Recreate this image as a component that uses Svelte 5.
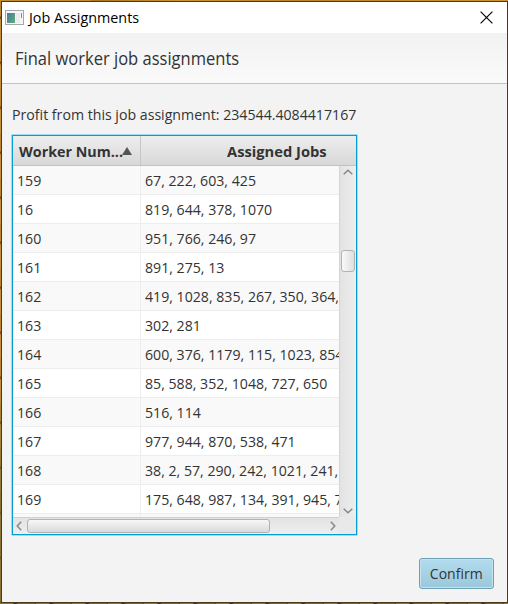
<script>
  const rows = [
    ['159', '67, 222, 603, 425'],
    ['16', '819, 644, 378, 1070'],
    ['160', '951, 766, 246, 97'],
    ['161', '891, 275, 13'],
    ['162', '419, 1028, 835, 267, 350, 364,'],
    ['163', '302, 281'],
    ['164', '600, 376, 1179, 115, 1023, 854'],
    ['165', '85, 588, 352, 1048, 727, 650'],
    ['166', '516, 114'],
    ['167', '977, 944, 870, 538, 471'],
    ['168', '38, 2, 57, 290, 242, 1021, 241,'],
    ['169', '175, 648, 987, 134, 391, 945, 7'],
    ['', '']
  ];
</script>

<div class="desktop">
  <div class="window">
    <div class="titlebar">
      <svg class="appicon" width="19" height="15" viewBox="0 0 19 15">
        <defs>
          <linearGradient id="pane" x1="0" y1="0" x2="1" y2="1">
            <stop offset="0" stop-color="#4b78a0" /><stop offset="1" stop-color="#5fae78" />
          </linearGradient>
        </defs>
        <rect x=".5" y=".5" width="18" height="14" fill="#f6f6f6" stroke="#a5a9ae" />
        <rect x="2" y="3" width="8" height="10" fill="url(#pane)" />
        <rect x="11" y="3" width="4" height="10" fill="#ebecee" />
        <rect x="16" y="3" width="1" height="5" fill="#54a184" />
      </svg>
      <span class="title">Job Assignments</span>
      <svg class="close" width="13" height="13" viewBox="0 0 13 13">
        <path d="M.6.6 12.4 12.4M12.4.6.6 12.4" stroke="#000" stroke-width="1.15" />
      </svg>
    </div>
    <div class="heading"><span>Final worker job assignments</span></div>
    <div class="content">
      <div class="profit"><span>Profit from this job assignment: 234544.4084417167</span></div>
      <div class="table">
        <div class="thead">
          <div class="th first">
            <span class="hw">Worker Num...</span>
            <svg width="10" height="8" viewBox="0 0 10 8"><path d="M5 0 10 8H0Z" fill="#555" /></svg>
          </div>
          <div class="th second"><span class="ha">Assigned Jobs</span></div>
        </div>
        <div class="mid">
          <div class="rows">
            {#each rows as [num, jobs], i}
              <div class="row" class:odd={i % 2 === 1}>
                <div class="cell num"><span>{num}</span></div>
                <div class="cell jobs"><span>{jobs}</span></div>
              </div>
            {/each}
          </div>
          <div class="vbar">
            <svg width="10" height="6" viewBox="0 0 10 6"><path d="M.7 5.2 5 1.2 9.3 5.2" fill="none" stroke="#858585" stroke-width="1.4" /></svg>
            <div class="vthumb"></div>
            <svg class="down" width="10" height="6" viewBox="0 0 10 6"><path d="M.7.8 5 4.8 9.3.8" fill="none" stroke="#858585" stroke-width="1.4" /></svg>
          </div>
        </div>
        <div class="foot">
          <div class="hbar">
            <svg width="6" height="10" viewBox="0 0 6 10"><path d="M5.2.7 1.2 5 5.2 9.3" fill="none" stroke="#858585" stroke-width="1.4" /></svg>
            <div class="hthumb"></div>
            <svg class="right" width="6" height="10" viewBox="0 0 6 10"><path d="M.8.7 4.8 5 .8 9.3" fill="none" stroke="#858585" stroke-width="1.4" /></svg>
          </div>
          <div class="corner"></div>
        </div>
      </div>
      <div class="actions"><button><span>Confirm</span></button></div>
    </div>
  </div>
</div>

<style>
  :global(body) { overflow: hidden; }
  .desktop, .desktop * { box-sizing: border-box; }
  svg { display: block; flex: none; }
  span { display: inline-block; transform: scaleX(.943); transform-origin: 0 50%; }
  .desktop {
    width: 508px;
    height: 604px;
    padding: 1px 0 1px 1px;
    font: 15px/20px "Open Sans", "Noto Sans", sans-serif;
    color: #333;
    background:
      linear-gradient(90deg, #c18b31 0 90px, #a57527 92px, #c99435 180px, #b9842c 300px, #c99434) 0 0 / 508px 1px no-repeat,
      repeating-linear-gradient(90deg, #8a7439 0 13px, #3b2d13 14px 16px, #79632f 18px 34px, #54431f 36px) 0 603px / 508px 1px no-repeat,
      linear-gradient(180deg, transparent 0 380px, rgba(100, 100, 50, .6) 500px),
      repeating-linear-gradient(180deg, #bb862f 0 16px, #6c4818 17px 18px, #c3913e 20px 44px, #9b6f2c 45px);
  }
  .window {
    width: 507px;
    height: 602px;
    border: 1px solid #4b3a20;
    background: #f3f3f3;
  }
  .titlebar {
    height: 31px;
    display: flex;
    align-items: center;
    padding: 0 14px 1px 3px;
    background: #fff;
    color: #000;
  }
  .title { margin-left: 5px; transform: scaleX(.957); }
  .close { margin-left: auto; }
  .heading {
    height: 51px;
    padding: 14px 0 0 13px;
    border-bottom: 1px solid #c3c3c3;
    background: linear-gradient(#f2f2f2, #fafafa);
    font-size: 18px;
    line-height: 22px;
    white-space: nowrap;
  }
  .heading span { transform: scaleX(.918); }
  .content { padding: 20px 13px 0 9px; }
  .profit { height: 30px; padding-left: 1px; white-space: nowrap; }
  .table {
    width: 347px;
    height: 402px;
    border: 1px solid #9fdcf2;
    border-radius: 1px;
    outline: 1px solid #039ed3;
    outline-offset: -2px;
    padding: 1px;
    overflow: hidden;
    background: #fff;
  }
  .thead { display: flex; height: 30px; font-weight: 700; background: linear-gradient(#eee, #d8d8d8); border-bottom: 1px solid #c2c2c2; }
  .th { display: flex; flex: none; align-items: center; white-space: nowrap; }
  .first { width: 128px; padding-left: 6px; border-right: 1px solid #c6c6c6; }
  .hw { width: 103px; transform: scaleX(.953); }
  .second { width: 271px; justify-content: center; }
  .ha { transform: scaleX(.98); transform-origin: 50% 50%; }
  .mid { display: flex; height: 351px; }
  .rows { width: 326px; overflow: hidden; }
  .row { display: flex; width: 401px; height: 29px; background: #f9f9f9; border-bottom: 1px solid #ededed; }
  .row.odd { background: #fff; }
  .cell { height: 28px; padding: 4px 0 0 4px; line-height: 20px; white-space: nowrap; }
  .num { width: 128px; border-right: 1px solid #ededed; }
  .vbar {
    width: 17px;
    display: flex;
    flex-direction: column;
    align-items: center;
    padding: 3px 0;
    border-left: 1px solid #d5d5d5;
    background: linear-gradient(90deg, #e3e3e3, #eee);
  }
  .vthumb { width: 14px; height: 22px; margin-top: 75px; border: 1px solid #b2b2b2; border-radius: 3px; background: linear-gradient(90deg, #fafafa, #dedede); }
  .down { margin-top: auto; }
  .foot { display: flex; height: 17px; }
  .hbar { width: 326px; display: flex; align-items: center; padding: 0 3px; border-top: 1px solid #d0d0d0; background: linear-gradient(#e3e3e3, #eee); }
  .hthumb { width: 243px; height: 14px; margin-left: 5px; border: 1px solid #b2b2b2; border-radius: 3px; background: linear-gradient(#f7f7f7, #dadada); }
  .right { margin-left: auto; }
  .corner { flex: 1; background: #e9e9e9; }
  .actions { display: flex; justify-content: flex-end; padding-top: 22px; }
  button {
    width: 75px;
    height: 31px;
    padding: 0 0 2px;
    border: 1px solid #6d9fb5;
    border-radius: 3px;
    background: linear-gradient(#b2dcee, #9bc7da);
    box-shadow: inset 0 0 0 1px #c2e4f1;
    font: 15px/20px "Open Sans", "Noto Sans", sans-serif;
    color: #333;
  }
  button span { transform: scaleX(.935); transform-origin: 50% 50%; }
</style>
